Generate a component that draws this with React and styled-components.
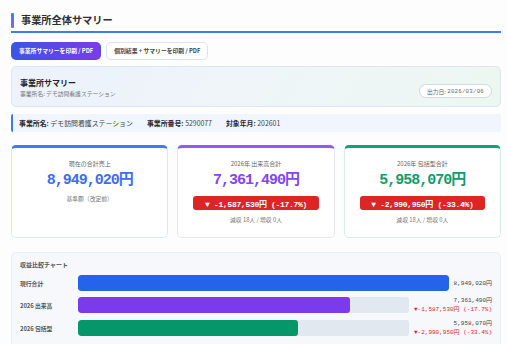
import React from "react";
import styled, { createGlobalStyle } from "styled-components";

const Global = createGlobalStyle`
  html, body { margin: 0; padding: 0; background: #fdfdfe; }
  body { font-family: "Noto Sans CJK JP", "Noto Sans", sans-serif; color: #333; }
`;

const MONO = `"Liberation Mono", "Noto Sans CJK JP", monospace`;

const Page = styled.div`
  padding: 9px 6px 0 11px;
  box-sizing: border-box;
  width: 507px;
`;

const Heading = styled.div`
  display: flex;
  align-items: center;
  gap: 7px;
  height: 22px;
  border-bottom: 2px solid #3b7cf4;
`;

const HeadBar = styled.div`
  width: 3px;
  height: 15px;
  border-radius: 1px;
  background: linear-gradient(180deg, #3b82f6, #8b5cf6);
`;

const HeadText = styled.h1`
  margin: 0;
  font-size: 10.2px;
  font-weight: 700;
  color: #2f2f33;
  line-height: 14px;
`;

const ButtonRow = styled.div`
  display: flex;
  gap: 5px;
  margin-top: 9px;
`;

const Button = styled.button`
  height: 18px;
  padding: 0 7px;
  border-radius: 5px;
  font-family: inherit;
  font-size: 5.8px;
  font-weight: 700;
  line-height: 1;
  cursor: pointer;
  border: 1px solid ${(p) => (p.primary ? "transparent" : "#dde3ec")};
  color: ${(p) => (p.primary ? "#fff" : "#444")};
  background: ${(p) => (p.primary ? "linear-gradient(90deg, #3b55e6, #7c3aed)" : "#fff")};
`;

const SummaryCard = styled.div`
  margin-top: 6px;
  height: 41px;
  box-sizing: border-box;
  border: 1px solid #dbe5f4;
  border-radius: 5px;
  background: linear-gradient(120deg, #edf2fc 0%, #eff5f8 50%, #ecf7f1 100%);
  padding: 8px;
  display: flex;
  justify-content: space-between;
  align-items: flex-end;
`;

const SummaryTitle = styled.div`
  font-size: 8px;
  font-weight: 700;
  line-height: 11px;
  color: #222;
`;

const SummarySub = styled.div`
  font-size: 5.8px;
  line-height: 8px;
  color: #777;
  margin-top: 2px;
`;

const Pill = styled.div`
  height: 14px;
  box-sizing: border-box;
  padding: 0 7px;
  border: 1px solid #d3dae4;
  border-radius: 8px;
  background: #fff;
  font-size: 5.8px;
  color: #666;
  display: flex;
  align-items: center;
`;

const PillMono = styled.span`
  font-family: ${MONO};
  letter-spacing: 0.2px;
`;

const InfoBar = styled.div`
  margin-top: 7px;
  height: 18px;
  box-sizing: border-box;
  background: #f1f5fd;
  border-left: 2px solid #3b7cf4;
  border-radius: 2px;
  display: flex;
  align-items: center;
  gap: 14px;
  padding-left: 6px;
  font-size: 6.9px;
  color: #444;
`;

const InfoItem = styled.span`
  b { font-weight: 700; color: #2a2a2a; }
`;

const CardGrid = styled.div`
  margin-top: 13px;
  display: grid;
  grid-template-columns: repeat(3, 1fr);
  gap: 9px;
`;

const Card = styled.div`
  height: 93px;
  box-sizing: border-box;
  border: 1px solid ${(p) => p.border};
  border-top: 3px solid ${(p) => p.accent};
  border-radius: 5px;
  background: #fff;
  padding-top: 11px;
  text-align: center;
`;

const CardLabel = styled.div`
  font-size: 6px;
  line-height: 10px;
  color: #666;
`;

const CardValue = styled.div`
  font-family: ${MONO};
  font-size: 15px;
  font-weight: 700;
  line-height: 18px;
  letter-spacing: -1px;
  margin-top: 3px;
  color: ${(p) => p.color};
`;

const CardNote = styled.div`
  font-size: 5.8px;
  line-height: 8px;
  color: #777;
  margin-top: ${(p) => p.top}px;
`;

const Badge = styled.div`
  margin: 6px 15px 0;
  height: 14px;
  border-radius: 3px;
  background: #dc2626;
  color: #fff;
  font-family: ${MONO};
  font-weight: 700;
  font-size: 8px;
  letter-spacing: -0.3px;
  display: flex;
  align-items: center;
  justify-content: center;
  white-space: pre;
`;

const Chart = styled.div`
  margin-top: 14px;
  background: #f6f8fb;
  border: 1px solid #eceff4;
  border-radius: 5px;
  padding: 8px 8px 14px 8px;
`;

const ChartTitle = styled.div`
  font-size: 6px;
  font-weight: 700;
  line-height: 8px;
  color: #555;
  margin-bottom: 6px;
`;

const Rows = styled.div`
  display: flex;
  flex-direction: column;
  gap: 5px;
`;

const Row = styled.div`
  display: flex;
  align-items: center;
  gap: 5px;
`;

const RowLabel = styled.div`
  width: 53px;
  flex: none;
  font-size: 5.8px;
  font-weight: 700;
  color: #555;
`;

const Track = styled.div`
  flex: 1;
  height: 16px;
  border-radius: 3px;
  background: #e2e8f0;
  overflow: hidden;
`;

const Fill = styled.div`
  height: 100%;
  border-radius: 3px;
  background: ${(p) => p.color};
`;

const ValueCol = styled.div`
  flex: none;
  text-align: right;
  font-family: ${MONO};
  font-size: 6px;
  line-height: 9px;
  color: #444;
  white-space: pre;
`;

const Diff = styled.div`
  color: #dc2626;
`;

const base = 8949020;
const rows = [
  { label: "現行合計", value: 8949020, color: "#2563eb" },
  { label: "2026 出来高", value: 7361490, color: "#7c3aed", diff: "▼-1,587,530円 (-17.7%)" },
  { label: "2026 包括型", value: 5958070, color: "#059669", diff: "▼-2,990,950円 (-33.4%)" },
];

const fmt = (n) => n.toLocaleString("en-US") + "円";

export default function App() {
  return (
    <>
      <Global />
      <Page>
        <Heading>
          <HeadBar />
          <HeadText>事業所全体サマリー</HeadText>
        </Heading>
        <ButtonRow>
          <Button primary>事業所サマリーを印刷 / PDF</Button>
          <Button>個別結果 + サマリーを印刷 / PDF</Button>
        </ButtonRow>
        <SummaryCard>
          <div>
            <SummaryTitle>事業所サマリー</SummaryTitle>
            <SummarySub>事業所名: デモ訪問看護ステーション</SummarySub>
          </div>
          <Pill>
            出力日:&nbsp;<PillMono>2026/03/06</PillMono>
          </Pill>
        </SummaryCard>
        <InfoBar>
          <InfoItem>
            <b>事業所名:</b> デモ訪問看護ステーション
          </InfoItem>
          <InfoItem>
            <b>事業所番号:</b> 5290077
          </InfoItem>
          <InfoItem>
            <b>対象年月:</b> 202601
          </InfoItem>
        </InfoBar>
        <CardGrid>
          <Card accent="#3b7cf4" border="#dce6fd">
            <CardLabel>現在の合計売上</CardLabel>
            <CardValue color="#3b6ef0">8,949,020円</CardValue>
            <CardNote top={5}>基準額（改定前）</CardNote>
          </Card>
          <Card accent="#8b5cf6" border="#ece3fd">
            <CardLabel>2026年 出来高合計</CardLabel>
            <CardValue color="#8446ee">7,361,490円</CardValue>
            <Badge>▼ -1,587,530円 (-17.7%)</Badge>
            <CardNote top={6}>減収 18人 / 増収 0人</CardNote>
          </Card>
          <Card accent="#10a37a" border="#d6f0e4">
            <CardLabel>2026年 包括型合計</CardLabel>
            <CardValue color="#159a6a">5,958,070円</CardValue>
            <Badge>▼ -2,990,950円 (-33.4%)</Badge>
            <CardNote top={6}>減収 18人 / 増収 0人</CardNote>
          </Card>
        </CardGrid>
        <Chart>
          <ChartTitle>収益比較チャート</ChartTitle>
          <Rows>
            {rows.map((r) => (
              <Row key={r.label}>
                <RowLabel>{r.label}</RowLabel>
                <Track>
                  <Fill color={r.color} style={{ width: `${(r.value / base) * 100}%` }} />
                </Track>
                <ValueCol>
                  <div>{fmt(r.value)}</div>
                  {r.diff && <Diff>{r.diff}</Diff>}
                </ValueCol>
              </Row>
            ))}
          </Rows>
        </Chart>
      </Page>
    </>
  );
}
